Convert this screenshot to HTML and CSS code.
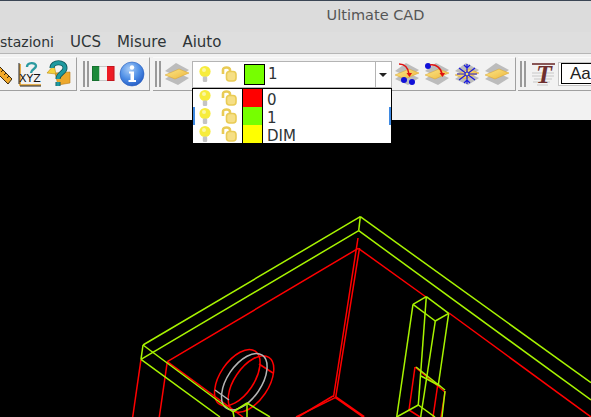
FILE: index.html

```html
<!DOCTYPE html>
<html lang="en">
<head>
  <meta charset="UTF-8">
  <title>Ultimate CAD</title>
  <link rel="stylesheet" href="styles.css">
</head>
<body>
  <svg class="defs" width="0" height="0">
    <defs>
      <radialGradient id="infoFill" cx="40%" cy="30%" r="75%">
        <stop offset="0" stop-color="#a9cdf7"/>
        <stop offset="0.55" stop-color="#4f8fe6"/>
        <stop offset="1" stop-color="#2259c4"/>
      </radialGradient>
      <linearGradient id="layerFill" x1="0" y1="0" x2="1" y2="1">
        <stop offset="0" stop-color="#fbe88c"/>
        <stop offset="1" stop-color="#eeb63a"/>
      </linearGradient>
      <symbol id="layers" viewBox="0 0 26 26">
        <polygon points="1,10 12,2 25,9 14,16" fill="#bcbcbc"/>
        <polygon points="1,18 12,11 25,17 14,24" fill="#bcbcbc"/>
        <polygon points="1,14 15,8 25,12 11,18" fill="url(#layerFill)" stroke="#d9a22a" stroke-width="0.5"/>
      </symbol>
      <symbol id="bulb" viewBox="0 0 16 18">
        <circle cx="8" cy="6.5" r="5.6" fill="#f7ec3c"/>
        <circle cx="7" cy="5" r="2" fill="#fbf7a0"/>
        <rect x="5.8" y="11.5" width="4.4" height="5.5" rx="1.2" fill="#c4c4c4"/>
      </symbol>
      <symbol id="lock" viewBox="0 0 16 16">
        <path d="M2 8V4C2 2 3.5 1.5 5.5 1.5S9 2 9 4V6" fill="none" stroke="#e9cb55" stroke-width="2.6"/>
        <rect x="5.5" y="5.5" width="9.5" height="9.5" rx="3" fill="#f6df85" stroke="#e9cb55" stroke-width="1.6"/>
      </symbol>
    </defs>
  </svg>

  <div class="titlebar">Ultimate CAD</div>

  <div class="menubar">
    <span class="menu-cut">stazioni</span>
    <span>UCS</span>
    <span>Misure</span>
    <span>Aiuto</span>
  </div>

  <div class="toolbar">
    <div class="toolgroup toolgroup-first">
      <svg class="tool tool-cut" viewBox="14 0 12 26">
        <polygon points="14,6 26,18 22,23 10,11" fill="#f1a92a" stroke="#3a2a10"/>
        <path d="M17 9l-2 2M20 12l-2 2M23 15l-2 2" stroke="#3a2a10"/>
      </svg>
      <svg class="tool" viewBox="0 0 26 26">
        <path d="M4 3V24H25" fill="none" stroke="#e09a20" stroke-width="1.6"/>
        <path d="M3 2V23M4 25H25" stroke="#222"/>
        <path d="M11 6C11 1 20 1 20 5C20 8 15 8 15 12" fill="none" stroke="#2b9aa0" stroke-width="2.4"/>
        <text class="icon-xyz" x="3" y="21">XYZ</text>
      </svg>
      <svg class="tool" viewBox="0 0 26 26">
        <polygon points="9,12 24,11 24,22 12,24" fill="#eda82c" stroke="#b97a14" stroke-width="0.6"/>
        <polygon points="1,12 8,4 10,13" fill="#f6d23c" stroke="#b98a14" stroke-width="0.6"/>
        <path d="M6 7C6 0 19 0 19 7C19 12 12 12 12 18M12 21V25" fill="none" stroke="#10585c" stroke-width="5"/>
        <path d="M6 7C6 0 19 0 19 7C19 12 12 12 12 18M12 21V25" fill="none" stroke="#1f9aa0" stroke-width="3.4"/>
      </svg>
    </div>

    <div class="toolgroup">
      <span class="handle"></span>
      <svg class="tool" viewBox="0 0 26 26">
        <rect x="0" y="5" width="7.5" height="15" fill="#1c8a3a"/>
        <rect x="7.5" y="5" width="7.5" height="15" fill="#f4f4f4"/>
        <rect x="15" y="5" width="7.5" height="15" fill="#ee1c25"/>
        <rect x="0.5" y="5.5" width="21.5" height="14" fill="none" stroke="#000" stroke-opacity="0.18"/>
      </svg>
      <svg class="tool tool-info" viewBox="0 0 26 26">
        <circle cx="13" cy="13" r="12" fill="url(#infoFill)" stroke="#2a5fbe" stroke-width="0.6"/>
        <circle cx="13" cy="6.5" r="2.2" fill="#fff"/>
        <path d="M10 10.5H15V19H17V21H9.5V19H11.5V12.5H10Z" fill="#fff"/>
      </svg>
    </div>

    <div class="toolgroup toolgroup-layers">
      <span class="handle"></span>
      <svg class="tool tool-layer"><use href="#layers"/></svg>
      <div class="combo">
        <svg class="bulb"><use href="#bulb"/></svg>
        <svg class="lock"><use href="#lock"/></svg>
        <span class="combo-swatch"></span>
        <span class="combo-label">1</span>
        <span class="combo-arrow"></span>
      </div>
      <svg class="tool" viewBox="0 0 26 26">
        <use href="#layers" width="26" height="26"/>
        <path d="M5 3C11 3 14 6 15 13" fill="none" stroke="#e01010" stroke-width="1.5"/>
        <polygon points="12.5,12 18,12 15.5,16" fill="#e01010"/>
        <circle cx="10" cy="19" r="3" fill="#1010d8"/>
        <circle cx="18" cy="21" r="3" fill="#1010d8"/>
      </svg>
      <svg class="tool" viewBox="0 0 26 26">
        <use href="#layers" width="26" height="26"/>
        <circle cx="4" cy="5" r="3" fill="#1010d8"/>
        <path d="M6 4C12 3 17 7 18 13" fill="none" stroke="#e01010" stroke-width="1.5"/>
        <polygon points="15.5,12 21,12 18.5,16" fill="#e01010"/>
      </svg>
      <svg class="tool" viewBox="0 0 26 26">
        <use href="#layers" width="26" height="26"/>
        <path d="M13 3V23M5 7L21 19M21 7L5 19M3 13H23M10 4l3 3 3-3M10 22l3-3 3 3" fill="none" stroke="#1a1ae0" stroke-width="1.2"/>
        <circle cx="13" cy="13" r="2" fill="#f5e26a" stroke="#1a1ae0"/>
      </svg>
      <svg class="tool"><use href="#layers"/></svg>
    </div>

    <div class="toolgroup toolgroup-last">
      <span class="handle"></span>
      <svg class="tool tool-font" viewBox="0 0 26 26">
        <path d="M2 12H24M2 15H24M4 18H22M3 21H20M7 24H18" stroke="#c8c8c8"/>
        <text class="icon-t" x="6" y="22">T</text>
        <path d="M2 3H25" stroke="#6e2f2f" stroke-width="1.6"/>
      </svg>
      <div class="fontbox"><span>Aa</span></div>
    </div>
  </div>

  <div class="statusrow"></div>

  <div class="canvas">
    <svg class="drawing" viewBox="0 120 591 297">
      <g class="red">
        <line x1="358.3" y1="248.3" x2="167.3" y2="361.7"/>
        <line x1="358.3" y1="248.3" x2="426" y2="297"/>
        <line x1="449" y1="313" x2="591" y2="417"/>
        <line x1="141" y1="359.3" x2="132.7" y2="417"/>
        <line x1="167.3" y1="361.7" x2="159.3" y2="417"/>
        <line x1="167.3" y1="361.7" x2="243" y2="417"/>
        <line x1="358" y1="238" x2="333.5" y2="397"/>
        <line x1="359.5" y1="248" x2="335.7" y2="397.3"/>
        <line x1="335.7" y1="397.3" x2="296" y2="417"/>
        <line x1="333" y1="396" x2="298" y2="417"/>
        <line class="thick" x1="335.7" y1="397.3" x2="364" y2="417"/>
        <ellipse cx="237.3" cy="377.7" rx="32" ry="17" transform="rotate(-56 237.3 377.7)"/>
        <ellipse cx="251" cy="384" rx="32" ry="17" transform="rotate(-56 251 384)"/>
        <line x1="259" y1="364" x2="273" y2="373"/>
        <line x1="415" y1="367" x2="409" y2="410"/>
        <line x1="415" y1="367" x2="445" y2="392"/>
        <line x1="445" y1="392" x2="441" y2="417"/>
        <line x1="438" y1="383" x2="433" y2="417"/>
        <line x1="409" y1="410" x2="420" y2="417"/>
      </g>
      <ellipse class="grey" cx="244.3" cy="381.7" rx="32" ry="17" transform="rotate(-56 244.3 381.7)"/>
      <line class="grey" x1="215" y1="390" x2="229" y2="400"/>
      <g class="green">
        <line x1="360.3" y1="216.7" x2="143" y2="345"/>
        <line x1="358.7" y1="230.7" x2="141" y2="359.3"/>
        <line x1="360.3" y1="216.7" x2="358.7" y2="230.7"/>
        <line x1="143" y1="345" x2="141" y2="359.3"/>
        <line x1="360.3" y1="216.7" x2="591" y2="382.7"/>
        <line x1="358.7" y1="230.7" x2="591" y2="400"/>
        <line x1="143" y1="345" x2="233" y2="412"/>
        <line x1="141" y1="359.3" x2="220" y2="417"/>
        <line x1="233" y1="412" x2="247" y2="403"/>
        <line x1="247" y1="403" x2="247" y2="417"/>
        <line x1="233" y1="412" x2="234" y2="417"/>
        <line x1="247" y1="403" x2="270" y2="417"/>
        <line x1="413" y1="304.3" x2="426.3" y2="296.7"/>
        <line x1="426.3" y1="296.7" x2="448.7" y2="313.3"/>
        <line x1="448.7" y1="313.3" x2="435.3" y2="321"/>
        <line x1="435.3" y1="321" x2="413" y2="304.3"/>
        <line x1="413" y1="304.3" x2="396.7" y2="417"/>
        <line x1="426.3" y1="296.7" x2="418.3" y2="405"/>
        <line x1="435.3" y1="321" x2="420.7" y2="417"/>
        <line x1="448.7" y1="313.3" x2="438.3" y2="385"/>
        <line x1="418.3" y1="405" x2="396.7" y2="417"/>
        <line x1="418.3" y1="405" x2="435" y2="417"/>
        <line x1="416" y1="367" x2="445" y2="390"/>
        <line x1="421" y1="376" x2="440" y2="386"/>
        <line x1="445" y1="391" x2="442" y2="417"/>
      </g>
    </svg>

    <div class="layer-popup">
      <div class="layer-row">
        <svg class="bulb"><use href="#bulb"/></svg>
        <svg class="lock"><use href="#lock"/></svg>
        <span class="layer-color layer-red"></span>
        <span class="layer-name">0</span>
      </div>
      <div class="layer-row layer-row-active">
        <svg class="bulb"><use href="#bulb"/></svg>
        <svg class="lock"><use href="#lock"/></svg>
        <span class="layer-color layer-green"></span>
        <span class="layer-name">1</span>
      </div>
      <div class="layer-row">
        <svg class="bulb"><use href="#bulb"/></svg>
        <svg class="lock"><use href="#lock"/></svg>
        <span class="layer-color layer-yellow"></span>
        <span class="layer-name">DIM</span>
      </div>
    </div>
  </div>
</body>
</html>
```

FILE: styles.css

```css
* {
  margin: 0;
  padding: 0;
  box-sizing: border-box;
}

html, body {
  width: 591px;
  height: 417px;
  overflow: hidden;
}

body {
  position: relative;
  display: flex;
  flex-direction: column;
  font-family: "DejaVu Sans", sans-serif;
  font-size: 15px;
  color: #2e3436;
  background: #f2f2f2;
}

.defs {
  position: absolute;
}

.titlebar {
  height: 32px;
  padding: 6px 0 0 160px;
  border-top: 1px solid #3b4655;
  background: #dcdcdc;
  color: #555;
  font-size: 14.5px;
  text-align: center;
}

.menubar {
  display: flex;
  gap: 16px;
  height: 22px;
  line-height: 20px;
  border-bottom: 1px solid #b6b6b6;
  background: #dedede;
}

.menu-cut {
  font-size: 14px;
}

.toolbar {
  display: flex;
  gap: 3px;
  height: 37px;
  padding-top: 3px;
}

.toolgroup {
  display: flex;
  align-items: center;
  flex: none;
  height: 34px;
  padding: 0 4px 0 3px;
  gap: 3px;
  border-right: 1px solid #a0a0a0;
  border-bottom: 1px solid #a0a0a0;
  border-top: 1px solid #fafafa;
}

.toolgroup-first {
  padding: 0 4px 0 0;
  gap: 4px;
}

.toolgroup-layers {
  gap: 4px;
  padding: 0 5px 0 2px;
}

.toolgroup-last {
  flex: 1;
  margin-left: -1px;
  padding: 0 0 0 2px;
  border-right: 0;
}

.handle {
  flex: none;
  width: 6px;
  height: 26px;
  border-left: 2px solid #9a9a9a;
  border-right: 2px solid #9a9a9a;
}

.tool {
  flex: none;
  width: 26px;
  height: 26px;
  overflow: visible;
}

.tool-cut {
  width: 12px;
  overflow: hidden;
}

.tool-info {
  margin-left: -2px;
}

.tool-layer {
  margin-left: -1px;
}

.tool-font {
  margin-left: 1px;
}

.icon-xyz {
  font: 11px "DejaVu Sans", sans-serif;
  fill: #111;
}

.icon-t {
  font: italic bold 26px "Liberation Serif", serif;
  fill: #6e2f2f;
}

/* layer combo */
.combo {
  display: flex;
  align-items: center;
  flex: none;
  width: 200px;
  height: 27px;
  margin: 0 -2px;
  border: 1px solid #b4b4b4;
  background: #fff;
}

.bulb {
  flex: none;
  width: 16px;
  height: 18px;
  margin-left: 4px;
}

.lock {
  flex: none;
  width: 16px;
  height: 16px;
  margin-left: 8px;
}

.combo-swatch {
  flex: none;
  width: 21px;
  height: 21px;
  margin-left: 7px;
  border: 1px solid #000;
  background: #76ff00;
}

.combo-label {
  flex: 1;
  margin-left: 3px;
}

.combo-arrow {
  flex: none;
  position: relative;
  width: 16px;
  height: 25px;
  border-left: 1px solid #b4b4b4;
}

.combo-arrow::after {
  content: "";
  position: absolute;
  left: 3px;
  top: 11px;
  border-left: 4px solid transparent;
  border-right: 4px solid transparent;
  border-top: 4px solid #222;
}

.fontbox {
  flex: 1;
  height: 24px;
  margin-left: -1px;
  padding-left: 2px;
  border: 1px solid #c4c4c4;
  border-right: 0;
  background: #fff;
}

.fontbox span {
  display: block;
  height: 21px;
  padding-left: 8px;
  border: 1px solid #000;
  border-right: 0;
  font: 17px/19px "Liberation Sans", sans-serif;
  color: #222;
}

.statusrow {
  height: 29px;
}

/* drawing area */
.canvas {
  position: relative;
  flex: 1;
  background: #000;
}

.drawing {
  display: block;
  width: 591px;
  height: 297px;
  fill: none;
  stroke-width: 1.5;
}

.red {
  stroke: #ff0000;
}

.thick {
  stroke-width: 2.6;
}

.green {
  stroke: #a8f400;
}

.grey {
  stroke: #b4b4b4;
}

/* open layer list, hangs over the canvas */
.layer-popup {
  position: absolute;
  left: 192px;
  top: -32px;
  width: 200px;
  height: 56px;
  border: 1px solid #000;
  background: #fff;
}

.layer-row {
  position: relative;
  display: flex;
  align-items: center;
  height: 18px;
}

.layer-row-active::before,
.layer-row-active::after {
  content: "";
  position: absolute;
  top: 0;
  width: 2px;
  height: 18px;
  background: #3f8ae2;
}

.layer-row-active::before {
  left: 0;
}

.layer-row-active::after {
  right: 0;
}

.layer-color {
  flex: none;
  width: 21px;
  height: 18px;
  margin-left: 5px;
  border-left: 1px solid #000;
  border-right: 1px solid #000;
}

.layer-red {
  background: #ff0000;
}

.layer-green {
  background: #76ff00;
}

.layer-yellow {
  background: #ffff00;
}

.layer-name {
  margin: 4px 0 0 4px;
  line-height: 16px;
}
```
